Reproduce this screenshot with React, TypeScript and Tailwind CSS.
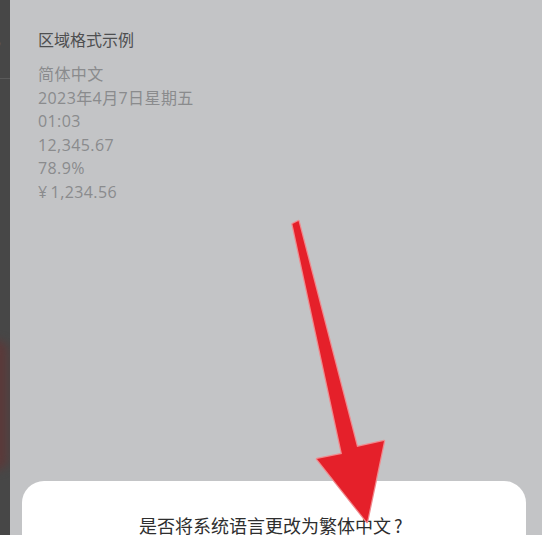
import React from 'react';

const lines = ['简体中文', '2023年4月7日星期五', '01:03', '12,345.67', '78.9%', '¥\u20091,234.56'];

function Arrow() {
  return (
    <svg className="absolute inset-0 pointer-events-none" width="542" height="535" viewBox="0 0 542 535">
      <defs>
        <filter id="soft" x="-20%" y="-20%" width="140%" height="140%">
          <feGaussianBlur stdDeviation="0.6" />
        </filter>
      </defs>
      <polygon
        points="292.5,224 298.5,221 357,447 384,441 367,522 317,459 342,454"
        fill="#f08a8e"
        stroke="#f08a8e"
        strokeWidth="2.5"
        strokeLinejoin="round"
        filter="url(#soft)"
      />
      <polygon
        points="292.5,224 298.5,221 357,447 384,441 367,522 317,459 342,454"
        fill="#e5202a"
        strokeLinejoin="round"
      />
    </svg>
  );
}

export default function App() {
  return (
    <div
      className="relative w-[542px] h-[535px] overflow-hidden flex"
      style={{ fontFamily: '"Noto Sans CJK SC", "Noto Sans", sans-serif' }}
    >
      {/* sliver of the screen behind */}
      <div className="relative w-[10px] shrink-0 bg-[#474747] overflow-hidden">
        <span className="absolute left-[-7px] top-[38px] text-[17px] leading-none text-[#6b6b6b]">?</span>
        <div className="absolute left-0 top-[78px] w-full h-px bg-[#5a5a5a]" />
        <div className="absolute left-[-14px] top-[340px] w-[22px] h-[130px] rounded-full bg-[#5a3a3a] blur-[4px]" />
      </div>

      <div className="flex-1 flex flex-col bg-[#c3c4c6]">
        <div
          className="pl-[28px] pt-[29px]"
          style={{ fontFamily: '"Open Sans", "Noto Sans CJK SC", sans-serif' }}
        >
          <div className="text-[16px] leading-[23.5px] text-[#4e4f50]">区域格式示例</div>
          <div className="mt-[10.5px] flex flex-col">
            {lines.map((l) => (
              <div key={l} className="text-[16px] leading-[23.5px] tracking-[0.4px] text-[#8a8b8d]">
                {l}
              </div>
            ))}
          </div>
        </div>

        <div className="mt-auto ml-[12px] mr-[16px] h-[54px] bg-white rounded-t-[22px] pt-[30px] text-center">
          <div className="text-[18px] leading-[28px] text-[#2e2e2e] whitespace-nowrap">
            是否将系统语言更改为繁体中文
            <span className="inline-block w-[18px] pl-[3px] text-left">?</span>
          </div>
        </div>
      </div>

      <Arrow />
    </div>
  );
}
